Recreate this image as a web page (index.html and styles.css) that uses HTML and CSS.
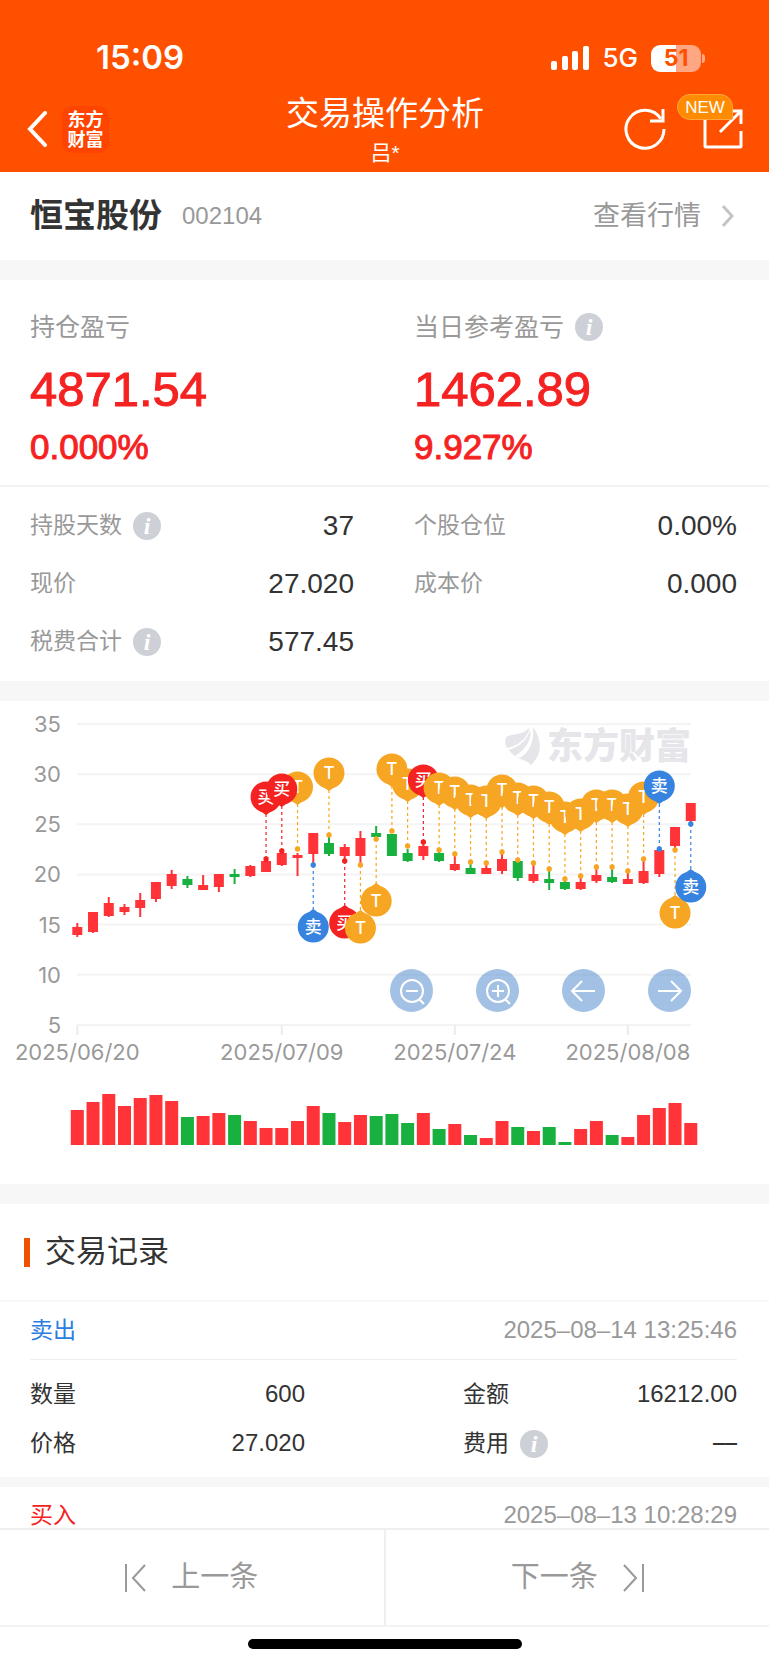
FILE: index.html
```html
<!DOCTYPE html>
<html lang="zh-cn">

<head>
    <meta charset="UTF-8">
    <meta name="viewport" content="width=device-width, initial-scale=1.0">
    <title>交易操作分析</title>
    <link rel="stylesheet" href="styles.css">
</head>

<body>
    <header class="header">
        <div class="status">
            <span class="time">15:09</span>
            <div class="status_right">
                <svg class="signal" width="38" height="24" viewBox="0 0 38 24" fill="#fff">
                    <rect x="0" y="15" width="6" height="9" rx="2" />
                    <rect x="11" y="10" width="6" height="14" rx="2" />
                    <rect x="21" y="5" width="6" height="19" rx="2" />
                    <rect x="32" y="0" width="6" height="24" rx="2" />
                </svg>
                <span class="net">5G</span>
                <span class="battery">51</span>
            </div>
        </div>
        <nav class="nav">
            <div class="nav_left">
                <button class="icon_btn" aria-label="返回">
                    <svg width="21" height="36" viewBox="0 0 21 36" fill="none" stroke="#fff" stroke-width="4" stroke-linecap="round">
                        <path d="M18 2L3 18L18 34" />
                    </svg>
                </button>
                <span class="logo">东方<br>财富</span>
            </div>
            <div class="nav_title">
                <h1>交易操作分析</h1>
                <p>吕*</p>
            </div>
            <div class="nav_right">
                <button class="icon_btn" aria-label="刷新">
                    <svg width="42" height="42" viewBox="0 0 42 42" fill="none" stroke="#fff" stroke-width="3">
                        <path d="M40 21A19 19 0 1 1 37 11" />
                        <path d="M39 1V13H26" />
                    </svg>
                </button>
                <button class="icon_btn share" aria-label="分享">
                    <svg width="40" height="40" viewBox="0 0 40 40" fill="none" stroke="#fff" stroke-width="3">
                        <path d="M2 8V37Q2 38 3 38H37Q38 38 38 37V22" />
                        <path d="M24 2H38V15M38 2L17 23" />
                    </svg>
                    <span class="new">NEW</span>
                </button>
            </div>
        </nav>
    </header>

    <main class="main">
        <section class="stock">
            <h2>恒宝股份</h2>
            <span class="code">002104</span>
            <a class="more" href="#">查看行情
                <svg width="13" height="22" viewBox="0 0 13 22" fill="none" stroke="#c4c4c8" stroke-width="3">
                    <path d="M2 1L11 11L2 21" />
                </svg>
            </a>
        </section>

        <section class="profit">
            <div class="summary">
                <div>
                    <p class="label">持仓盈亏</p>
                    <p class="big">4871.54</p>
                    <p class="rate">0.000%</p>
                </div>
                <div>
                    <p class="label">当日参考盈亏<button class="info" aria-label="说明">i</button></p>
                    <p class="big">1462.89</p>
                    <p class="rate">9.927%</p>
                </div>
            </div>
            <dl class="detail">
                <div><dt>持股天数<button class="info" aria-label="说明">i</button></dt><dd>37</dd></div>
                <div><dt>个股仓位</dt><dd>0.00%</dd></div>
                <div><dt>现价</dt><dd>27.020</dd></div>
                <div><dt>成本价</dt><dd>0.000</dd></div>
                <div><dt>税费合计<button class="info" aria-label="说明">i</button></dt><dd>577.45</dd></div>
            </dl>
        </section>

        <section class="chart">
            <svg class="kline" viewBox="0 1 769 483"></svg>
            <div class="tools">
                <button aria-label="缩小">
                    <svg viewBox="0 0 43 43"><circle cx="22" cy="22" r="11" /><path d="M16 22H28M29 30L34 35" /></svg>
                </button>
                <button aria-label="放大">
                    <svg viewBox="0 0 43 43"><circle cx="22" cy="22" r="11" /><path d="M16 22H28M22 16V28M29 30L34 35" /></svg>
                </button>
                <button aria-label="左移">
                    <svg viewBox="0 0 43 43"><path d="M33 22H11M20 12L10 22L20 32" /></svg>
                </button>
                <button aria-label="右移">
                    <svg viewBox="0 0 43 43"><path d="M10 22H32M23 12L33 22L23 32" /></svg>
                </button>
            </div>
        </section>

        <section class="records">
            <h3>交易记录</h3>
            <article class="record">
                <div class="record_top"><span class="sell">卖出</span><time>2025–08–14 13:25:46</time></div>
                <dl class="record_body">
                    <div><dt>数量</dt><dd>600</dd></div>
                    <div><dt>金额</dt><dd>16212.00</dd></div>
                    <div><dt>价格</dt><dd>27.020</dd></div>
                    <div><dt>费用<button class="info" aria-label="说明">i</button></dt><dd class="empty">––</dd></div>
                </dl>
            </article>
            <article class="record">
                <div class="record_top"><span class="buy">买入</span><time>2025–08–13 10:28:29</time></div>
            </article>
        </section>
    </main>

    <footer class="footer">
        <div class="pager">
            <button>
                <svg width="22" height="28" viewBox="0 0 22 28"><path d="M1 0V28M20 1L8 14L20 27" /></svg>
                上一条
            </button>
            <button>
                下一条
                <svg width="22" height="28" viewBox="0 0 22 28"><path d="M21 0V28M2 1L14 14L2 27" /></svg>
            </button>
        </div>
        <div class="home"></div>
    </footer>

    <script src="chart.js"></script>
</body>

</html>
```

FILE: styles.css
```css
* {
    margin: 0;
    padding: 0;
    box-sizing: border-box;
}

body {
    height: 100vh;
    display: flex;
    flex-direction: column;
    overflow: hidden;
    background: #fff;
    color: #333;
    font-family: "Liberation Sans", "Noto Sans CJK SC", sans-serif;
    font-size: 24px;
    line-height: 1.2;
}

button {
    border: 0;
    background: none;
    font-family: inherit;
    line-height: inherit;
    color: inherit;
}

h1,
h2,
h3 {
    font-weight: 400;
}

/* 顶部 */
.header {
    flex: none;
    background: #ff5000;
    color: #fff;
}

.status {
    height: 86px;
    padding: 30px 64px 0 96px;
    display: flex;
    justify-content: space-between;
    align-items: center;
    font-family: Inter, sans-serif;
}

.time {
    font-size: 33px;
    font-weight: 600;
}

.status_right {
    display: flex;
    align-items: center;
    gap: 13px;
}

.net {
    font-size: 26px;
    font-weight: 500;
}

.battery {
    position: relative;
    width: 50px;
    height: 27px;
    margin-right: 4px;
    border-radius: 9px;
    background: linear-gradient(90deg, #fff 50%, #ffa783 50%);
    color: #ff5000;
    font-size: 23px;
    font-weight: 700;
    line-height: 27px;
    text-align: center;
}

.battery::after {
    position: absolute;
    content: "";
    right: -4px;
    top: 9px;
    width: 3px;
    height: 9px;
    border-radius: 0 3px 3px 0;
    background: #ffa783;
}

.nav {
    height: 86px;
    padding: 0 26px 0 27px;
    display: grid;
    grid-template-columns: 1fr auto 1fr;
    align-items: center;
}

.nav_left,
.nav_right {
    display: flex;
    align-items: center;
    gap: 14px;
}

.nav_right {
    justify-content: flex-end;
    gap: 37px;
}

.icon_btn {
    position: relative;
    display: flex;
}

.logo {
    width: 47px;
    height: 47px;
    padding-top: 4px;
    border-radius: 10px;
    background: #ff4400;
    font-size: 18px;
    font-weight: 700;
    line-height: 20px;
    text-align: center;
}

.nav_title {
    padding-top: 4px;
    text-align: center;
}

.nav_title h1 {
    font-size: 33px;
    line-height: 44px;
}

.nav_title p {
    font-size: 21px;
    line-height: 34px;
}

.new {
    position: absolute;
    left: -26px;
    top: -15px;
    width: 56px;
    height: 26px;
    border: 1px solid #ffa63d;
    border-radius: 13px 13px 2px 13px;
    background: #ff8c00;
    font-size: 17px;
    line-height: 25px;
    text-align: center;
}

/* 股票名称 */
.main {
    flex: 1;
    min-height: 0;
    overflow: hidden;
}

.stock {
    height: 88px;
    padding: 0 35px 0 30px;
    display: flex;
    align-items: center;
}

.stock h2 {
    font-size: 33px;
    font-weight: 700;
}

.code {
    margin-left: 20px;
    color: #999;
}

.more {
    margin-left: auto;
    display: flex;
    align-items: center;
    gap: 20px;
    color: #999;
    font-size: 27px;
    text-decoration: none;
}

.profit,
.chart,
.records {
    border-top: 20px solid #f7f7f7;
}

/* 盈亏 */
.summary {
    padding: 27px 30px 18px;
    display: grid;
    grid-template-columns: 384px 1fr;
    border-bottom: 2px solid #f3f3f4;
}

.label {
    display: flex;
    align-items: center;
    color: #999;
    font-size: 25px;
    line-height: 40px;
}

.info {
    width: 28px;
    height: 28px;
    margin-left: 11px;
    border-radius: 50%;
    background: #cdd0d6;
    color: #fff;
    font: italic 700 24px/28px "Liberation Serif", serif;
    text-align: center;
}

.big,
.rate {
    color: #f52222;
    -webkit-text-stroke: 1px #f52222;
}

.big {
    margin-top: 14px;
    font-size: 49px;
    line-height: 56px;
}

.rate {
    margin-top: 10px;
    font-size: 35px;
    line-height: 40px;
}

.detail {
    padding: 10px 32px 10px 30px;
    display: grid;
    grid-template-columns: 324px 323px;
    justify-content: space-between;
}

.detail div,
.record_body div {
    display: flex;
    justify-content: space-between;
    align-items: center;
}

.detail div {
    height: 58px;
}

dt {
    display: flex;
    align-items: center;
    font-size: 23px;
}

.detail dt {
    color: #999;
}

.detail dd {
    font-size: 28px;
}

/* K线 */
.chart {
    position: relative;
}

.kline {
    display: block;
    width: 100%;
}

.axis {
    fill: #999;
    font-family: Inter, sans-serif;
    font-size: 22px;
}

.mark {
    fill: #fff;
    font-family: Inter, "Noto Sans CJK SC", sans-serif;
    font-size: 17px;
    font-weight: 500;
    text-anchor: middle;
}

.watermark {
    fill: #e5e5ea;
    font-size: 36px;
    font-weight: 900;
}

.tools {
    position: absolute;
    top: 268px;
    right: 78px;
    display: flex;
    gap: 43px;
}

.tools button {
    width: 43px;
    height: 43px;
    border-radius: 50%;
    background: rgba(72, 131, 202, .5);
}

.tools svg {
    display: block;
    fill: none;
    stroke: #fff;
    stroke-width: 2;
}

/* 交易记录 */
.records h3 {
    height: 96px;
    padding: 0 24px;
    display: flex;
    align-items: center;
    gap: 15px;
    font-size: 31px;
}

.records h3::before {
    content: "";
    width: 6px;
    height: 29px;
    background: #ee5200;
}

.record {
    padding: 0 32px 0 30px;
    border-top: 2px solid #f7f7f7;
}

.record + .record {
    border-top-width: 10px;
}

.record_top {
    height: 57px;
    display: flex;
    justify-content: space-between;
    align-items: center;
}

.sell,
.buy {
    font-size: 23px;
}

time {
    color: #999;
}

.sell {
    color: #2b7de1;
}

.buy {
    color: #f52222;
}

.record_body {
    padding: 10px 0 9px;
    display: grid;
    grid-template-columns: 275px 274px;
    justify-content: space-between;
    border-top: 1px solid #efefef;
}

.record_body div {
    height: 49px;
}

.empty {
    font-family: Inter, sans-serif;
}

/* 底部 */
.footer {
    flex: none;
    background: #fff;
}

.pager {
    display: flex;
    border-top: 2px solid #efefef;
    border-bottom: 2px solid #f3f3f3;
}

.pager button {
    flex: 1;
    height: 95px;
    display: flex;
    justify-content: center;
    align-items: center;
    gap: 24px;
    color: #999;
    font-size: 29px;
}

.pager button + button {
    border-left: 2px solid #efefef;
}

.pager svg {
    fill: none;
    stroke: #999;
    stroke-width: 2;
}

.home {
    width: 274px;
    height: 10px;
    margin: 12px auto 16px;
    border-radius: 5px;
    background: #000;
}
```

FILE: chart.js
```js
var svg = document.querySelector(".kline")
var RED = "#ff3338"
var GREEN = "#18b03f"

// 颜色, 实体上, 实体下, 影线上, 影线下, 成交量
var candles = [
    ["r", 227, 235, 223, 237, 35], ["r", 212, 232, 212, 233, 43], ["r", 203, 216, 197, 217, 51],
    ["r", 207, 212, 204, 215, 39], ["r", 200, 208, 193, 217, 47], ["r", 182, 199, 182, 202, 50],
    ["r", 174, 186, 170, 189, 44], ["g", 179, 185, 176, 188, 28], ["r", 185, 190, 175, 190, 29],
    ["r", 174, 187, 174, 192, 32], ["g", 174, 177, 169, 184, 30], ["r", 166, 176, 165, 177, 24],
    ["r", 161, 172, 159, 172, 17], ["r", 153, 165, 151, 166, 17], ["r", 155, 158, 153, 176, 24],
    ["r", 133, 154, 133, 163, 39], ["g", 143, 154, 137, 156, 32], ["r", 147, 156, 144, 160, 23],
    ["r", 138, 156, 131, 163, 30], ["g", 133, 137, 126, 137, 29], ["g", 134, 156, 134, 156, 31],
    ["g", 153, 161, 149, 162, 22], ["r", 146, 156, 142, 160, 32], ["g", 153, 161, 151, 162, 16],
    ["r", 164, 170, 155, 171, 21], ["g", 168, 174, 163, 174, 10], ["r", 168, 174, 164, 174, 7],
    ["r", 159, 171, 153, 174, 24], ["g", 161, 178, 160, 181, 18], ["r", 174, 181, 164, 183, 14],
    ["g", 179, 183, 170, 190, 18], ["g", 182, 189, 180, 190, 3], ["r", 182, 189, 178, 190, 16],
    ["r", 175, 181, 168, 183, 24], ["g", 177, 182, 168, 183, 10], ["r", 179, 184, 172, 184, 8],
    ["r", 171, 183, 160, 184, 30], ["r", 150, 174, 148, 177, 37], ["r", 127, 146, 127, 149, 42],
    ["r", 103, 121, 103, 124, 22]
]

// 序号, 文字, 气泡中心, 圆点, 方向
var marks = [
    [14, "T", 87, 149, 1], [12, "买", 97, 159, 1], [13, "买", 89, 151, 1], [15, "卖", 227, 165, -1],
    [16, "T", 73, 135, 1], [17, "买", 223, 161, -1], [18, "T", 228, 165, -1], [19, "T", 201, 139, -1],
    [20, "T", 69, 131, 1], [21, "T", 84, 146, 1], [22, "买", 80, 142, 1], [23, "T", 88, 150, 1],
    [24, "T", 92, 154, 1], [25, "T", 100, 162, 1], [26, "T", 101, 163, 1], [27, "T", 90, 152, 1],
    [28, "T", 98, 160, 1], [29, "T", 101, 163, 1], [30, "T", 107, 169, 1], [31, "T", 117, 179, 1],
    [32, "T", 114, 176, 1], [33, "T", 105, 167, 1], [34, "T", 105, 167, 1], [35, "T", 109, 171, 1],
    [36, "T", 97, 159, 1], [37, "卖", 86, 149, 1], [38, "T", 213, 150, -1], [39, "卖", 187, 124, -1]
]
var markColor = { "T": "#f6a623", "买": "#f52222", "卖": "#3783e0" }

var getX = function (i) {
    return 77.3 + i * 15.73
}

var html = ""

// 坐标轴
for (var v = 35; v >= 5; v -= 5) {
    var y = 24 + (35 - v) * 10.03
    html += `<path d="M77 ${y}H691" stroke="#f4f4f5" stroke-width="2"/>`
    html += `<text class="axis" x="61" y="${y + 8}" text-anchor="end">${v}</text>`
}
var dates = [[0, "2025/06/20"], [13, "2025/07/09"], [24, "2025/07/24"], [35, "2025/08/08"]]
dates.forEach((item) => {
    var x = getX(item[0])
    html += `<path d="M${x} 325v10" stroke="#ececee" stroke-width="2"/>`
    html += `<text class="axis" x="${x}" y="360" text-anchor="middle">${item[1]}</text>`
})

// 水印
html += `<g fill="#e5e5ea">
    <path d="M506 37C513 33 522 36 529 28C529 37 518 46 507 48C505 45 505 40 506 37Z"/>
    <path d="M530 28C533 40 524 51 515 56C512 54 510 52 509 50C520 46 529 39 530 28Z"/>
    <path d="M533 27C539 35 542 47 538 55C536 60 533 63 531 65C529 62 524 60 517 58C527 52 535 42 533 27Z"/>
    <path d="M530 27C535 40 529 52 518 58" fill="none" stroke="#fff" stroke-width="1.5"/>
</g>
<text class="watermark" x="547" y="59">东方财富</text>`

// 蜡烛和成交量
candles.forEach((c, i) => {
    var x = getX(i)
    var color = c[0] == "r" ? RED : GREEN
    html += `<rect x="${x - 5}" y="${c[1]}" width="10" height="${c[2] - c[1]}" fill="${color}"/>`
    html += `<rect x="${x - 1}" y="${c[3]}" width="2" height="${c[4] - c[3]}" fill="${color}"/>`
    html += `<rect x="${x - 6.5}" y="${445 - c[5]}" width="13" height="${c[5]}" fill="${color}"/>`
})

// 买卖点
marks.forEach((m) => {
    var x = getX(m[0])
    var cy = m[2]
    var dir = m[4]
    var color = markColor[m[1]]
    html += `<path d="M${x} ${m[3]}V${cy + 17 * dir}" stroke="${color}" stroke-width="1.2" stroke-dasharray="3 3"/>`
    html += `<circle cx="${x}" cy="${m[3]}" r="2.7" fill="${color}"/>`
    html += `<circle cx="${x}" cy="${cy}" r="15.5" fill="${color}"/>`
    html += `<path d="M${x - 11} ${cy + 10.5 * dir}Q${x - 4} ${cy + 15 * dir} ${x} ${cy + 18 * dir}Q${x + 4} ${cy + 15 * dir} ${x + 11} ${cy + 10.5 * dir}Z" fill="${color}"/>`
    html += `<text class="mark" x="${x}" y="${cy + 6}">${m[1]}</text>`
})

svg.innerHTML = html
```
